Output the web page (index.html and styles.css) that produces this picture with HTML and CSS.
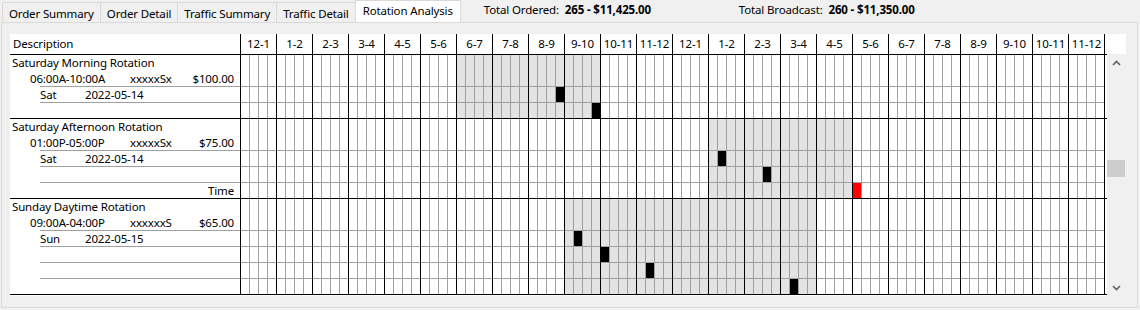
FILE: index.html
```html
<!DOCTYPE html>
<html lang="en">
<head>
    <meta charset="UTF-8">
    <title>Rotation Analysis</title>
    <link rel="stylesheet" href="styles.css">
</head>
<body>
    <div class="tabbar">
        <ul class="tabs">
            <li class="tab">Order Summary</li>
            <li class="tab">Order Detail</li>
            <li class="tab">Traffic Summary</li>
            <li class="tab">Traffic Detail</li>
            <li class="tab active">Rotation Analysis</li>
        </ul>
        <div class="total">Total Ordered: <b>265 - $11,425.00</b></div>
        <div class="total">Total Broadcast: <b>260 - $11,350.00</b></div>
    </div>

    <div class="panel">
        <div class="sheet">
            <div class="sheet-head">
                <div class="desc-head">Description</div>
                <div class="hours">
                    <div class="hour">12-1</div><div class="hour">1-2</div><div class="hour">2-3</div><div class="hour">3-4</div>
                    <div class="hour">4-5</div><div class="hour">5-6</div><div class="hour">6-7</div><div class="hour">7-8</div>
                    <div class="hour">8-9</div><div class="hour">9-10</div><div class="hour">10-11</div><div class="hour">11-12</div>
                    <div class="hour">12-1</div><div class="hour">1-2</div><div class="hour">2-3</div><div class="hour">3-4</div>
                    <div class="hour">4-5</div><div class="hour">5-6</div><div class="hour">6-7</div><div class="hour">7-8</div>
                    <div class="hour">8-9</div><div class="hour">9-10</div><div class="hour">10-11</div><div class="hour">11-12</div>
                </div>
            </div>

            <div class="sheet-body">
                <div class="rows">
                    <!-- Saturday Morning -->
                    <div class="block">
                        <div class="desc">
                            <div class="desc-top">
                                <div class="title">Saturday Morning Rotation</div>
                                <div class="times"><span class="span">06:00A-10:00A</span><span class="days">xxxxxSx</span><span class="rate">$100.00</span></div>
                            </div>
                            <div class="line"><span class="day">Sat</span><span>2022-05-14</span></div>
                            <div class="line"></div>
                        </div>
                        <div class="timeline rows-2">
                            <div class="window" style="grid-column: 25 / 41"></div>
                            <div class="spot" style="grid-column: 36; grid-row: 2"></div>
                            <div class="spot" style="grid-column: 40; grid-row: 3"></div>
                        </div>
                    </div>

                    <!-- Saturday Afternoon -->
                    <div class="block">
                        <div class="desc">
                            <div class="desc-top">
                                <div class="title">Saturday Afternoon Rotation</div>
                                <div class="times"><span class="span">01:00P-05:00P</span><span class="days">xxxxxSx</span><span class="rate">$75.00</span></div>
                            </div>
                            <div class="line"><span class="day">Sat</span><span>2022-05-14</span></div>
                            <div class="line"></div>
                            <div class="line right">Time</div>
                        </div>
                        <div class="timeline rows-3">
                            <div class="window" style="grid-column: 53 / 69"></div>
                            <div class="spot" style="grid-column: 54; grid-row: 2"></div>
                            <div class="spot" style="grid-column: 59; grid-row: 3"></div>
                            <div class="spot late" style="grid-column: 69; grid-row: 4"></div>
                        </div>
                    </div>

                    <!-- Sunday Daytime -->
                    <div class="block">
                        <div class="desc">
                            <div class="desc-top">
                                <div class="title">Sunday Daytime Rotation</div>
                                <div class="times"><span class="span">09:00A-04:00P</span><span class="days">xxxxxxS</span><span class="rate">$65.00</span></div>
                            </div>
                            <div class="line"><span class="day">Sun</span><span>2022-05-15</span></div>
                            <div class="line"></div>
                            <div class="line"></div>
                            <div class="line"></div>
                        </div>
                        <div class="timeline rows-4">
                            <div class="window" style="grid-column: 37 / 65"></div>
                            <div class="spot" style="grid-column: 38; grid-row: 2"></div>
                            <div class="spot" style="grid-column: 41; grid-row: 3"></div>
                            <div class="spot" style="grid-column: 46; grid-row: 4"></div>
                            <div class="spot" style="grid-column: 62; grid-row: 5"></div>
                        </div>
                    </div>
                </div>

                <div class="scrollbar">
                    <div class="arrow">
                        <svg width="9" height="6" viewBox="0 0 9 6"><polyline points="1,5 4.5,1.5 8,5" fill="none" stroke="#606060" stroke-width="1.6"/></svg>
                    </div>
                    <div class="track">
                        <div class="thumb"></div>
                    </div>
                    <div class="arrow">
                        <svg width="9" height="6" viewBox="0 0 9 6"><polyline points="1,1 4.5,4.5 8,1" fill="none" stroke="#606060" stroke-width="1.6"/></svg>
                    </div>
                </div>
            </div>
        </div>
    </div>
</body>
</html>
```

FILE: styles.css
```css
/* Base */
* {
    margin: 0;
    padding: 0;
    box-sizing: border-box;
}

body {
    font-family: 'Noto Sans', sans-serif;
    font-size: 11.5px;
    letter-spacing: -0.15px;
    color: #000;
    background-color: #f0f0f0;
    width: 1140px;
    height: 310px;
    overflow: hidden;
}

/* Tab strip */
.tabbar {
    display: flex;
    height: 22px;
    padding-left: 2px;
}

.tabs {
    display: flex;
    list-style: none;
}

.tab {
    margin-top: 2px;
    height: 20px;
    padding: 0 6px;
    line-height: 21px;
    background-color: #f0f0f0;
    border: 1px solid #d9d9d9;
    border-right: none;
    border-bottom: none;
}

.tab.active {
    margin-top: 0;
    height: 22px;
    padding: 0 7px;
    line-height: 20px;
    background-color: #fff;
    border-right: 1px solid #d9d9d9;
}

.total {
    min-width: 255px;
    line-height: 19px;
}

.tabs + .total {
    margin-left: 23px;
}

.total b {
    margin-left: 3px;
}

/* Panel */
.panel {
    margin-left: 1px;
    width: 1137px;
    height: 286px;
    padding: 11px 0 0 8px;
    border: 1px solid #dadada;
    background-color: #f0f0f0;
}

.sheet {
    width: 1116px;
    background-color: #fff;
}

/* Column header */
.sheet-head {
    display: flex;
    height: 20px;
    line-height: 19px;
}

.desc-head {
    width: 230px;
    padding-left: 3px;
}

.hours {
    display: flex;
    border-right: 1px solid #000;
}

.hour {
    width: 36px;
    text-align: center;
    border-left: 1px solid #000;
}

/* Body */
.sheet-body {
    display: flex;
}

.rows {
    width: 1097px;
    padding-bottom: 1px;
}

.block {
    display: flex;
    border-top: 1px solid #000;
}

.block:last-child {
    border-bottom: 1px solid #000;
}

.desc {
    width: 230px;
}

.desc-top {
    height: 31px;
}

.title {
    height: 16px;
    line-height: 16px;
    padding-left: 2px;
}

.times {
    display: flex;
    height: 15px;
    line-height: 15px;
    padding: 0 6px 0 20px;
}

.times .span {
    width: 100px;
}

.times .rate {
    margin-left: auto;
}

.line {
    display: flex;
    height: 16px;
    line-height: 15px;
    margin-left: 30px;
    border-top: 1px solid #a0a0a0;
}

.line .day {
    width: 45px;
}

.line.right {
    justify-content: flex-end;
    padding-right: 6px;
}

/* Timeline grid: 96 quarter-hour columns */
.timeline {
    position: relative;
    display: grid;
    grid-template-columns: repeat(96, 9px);
    width: 865px;
    border-right: 1px solid #000;
}

.rows-2 { grid-template-rows: 31px repeat(2, 16px); }
.rows-3 { grid-template-rows: 31px repeat(3, 16px); }
.rows-4 { grid-template-rows: 31px repeat(4, 16px); }

.timeline::after {
    content: '';
    position: absolute;
    inset: 0;
    z-index: 1;
    pointer-events: none;
    background-image:
        repeating-linear-gradient(to right, #000 0 1px, transparent 1px 36px),
        repeating-linear-gradient(to right, #a0a0a0 0 1px, transparent 1px 9px),
        repeating-linear-gradient(to bottom, #a0a0a0 0 1px, transparent 1px 16px);
    background-size: 100% 100%, 100% 100%, 100% calc(100% - 31px);
    background-position: 0 0, 0 0, 0 31px;
    background-repeat: no-repeat;
}

.window {
    grid-row: 1 / -1;
    background-color: #e3e3e3;
}

.spot {
    background-color: #000;
}

.spot.late {
    background-color: #ff0000;
}

/* Scrollbar */
.scrollbar {
    display: flex;
    flex-direction: column;
    width: 19px;
    height: 242px;
    background-color: #f0f0f0;
}

.arrow {
    display: flex;
    align-items: center;
    justify-content: center;
    height: 17px;
}

.track {
    flex: 1;
}

.thumb {
    margin-top: 89px;
    width: 18px;
    height: 17px;
    background-color: #cdcdcd;
}
```
